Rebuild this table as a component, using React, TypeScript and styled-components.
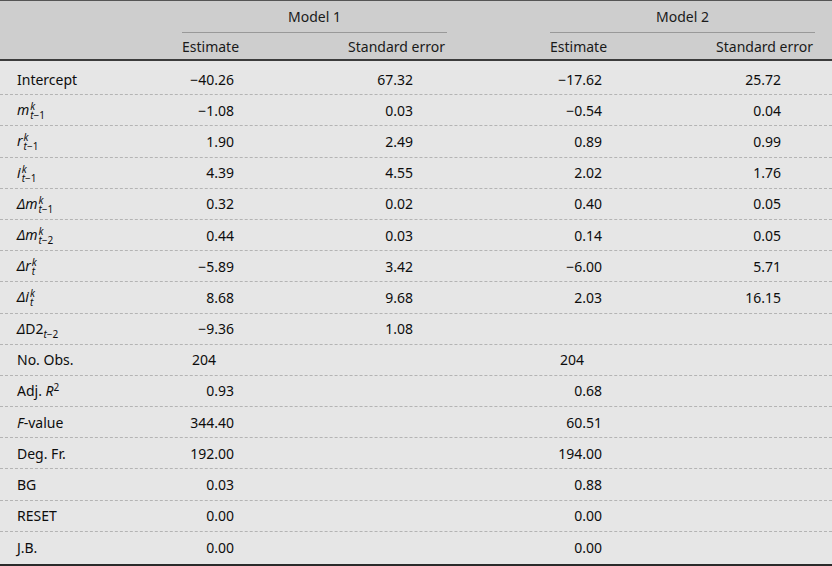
import styled, { createGlobalStyle } from "styled-components";

const GlobalStyle = createGlobalStyle`
  html, body {
    margin: 0;
    padding: 0;
    background: #e6e6e6;
  }
  body {
    font-family: "Noto Sans", "Open Sans", sans-serif;
    color: #0d0d0d;
  }
`;

const COLUMNS = "182px 130px 135px 103px 130px 135px 17px";

const Table = styled.div`
  width: 832px;
  height: 566px;
  box-sizing: border-box;
  border-top: 1px solid #555;
  border-bottom: 2px solid #2a2a2a;
  background: #e6e6e6;
  font-size: 14px;
`;

const Head = styled.div`
  background: #cecece;
  border-bottom: 2px solid #3c3c3c;
`;

const HeadRow = styled.div<{ $height: number }>`
  display: grid;
  grid-template-columns: ${COLUMNS};
  height: ${(p) => p.$height}px;
  align-items: stretch;
`;

const ModelTitle = styled.div`
  grid-column: span 2;
  display: flex;
  align-items: center;
  justify-content: center;
  border-bottom: 1px solid #999;
  color: #1a1a1a;
`;

const HeadCell = styled.div<{ $right?: boolean }>`
  display: flex;
  align-items: center;
  justify-content: ${(p) => (p.$right ? "flex-end" : "flex-start")};
  padding-right: ${(p) => (p.$right ? "2px" : "0")};
  color: #1a1a1a;
`;

const Body = styled.div`
  padding-top: 3px;
`;

const Row = styled.div`
  display: grid;
  grid-template-columns: ${COLUMNS};
  height: 31.2px;
  box-sizing: border-box;
  align-items: center;
  border-bottom: 1px dashed #b4b4b4;

  &:last-child {
    border-bottom: none;
  }
`;

const Label = styled.div`
  padding-left: 17px;
  white-space: nowrap;
`;

const EstCell = styled.div<{ $stat?: boolean }>`
  text-align: ${(p) => (p.$stat ? "left" : "right")};
  padding-left: ${(p) => (p.$stat ? "10px" : "0")};
  padding-right: ${(p) => (p.$stat ? "0" : "78px")};
`;

const SeCell = styled.div`
  text-align: right;
  padding-right: 34px;
`;

const I = styled.i`
  font-style: italic;
`;

const Scripts = styled.span`
  display: inline-flex;
  flex-direction: column;
  vertical-align: 5px;
  font-size: 10px;
  line-height: 9px;
  margin-left: 1px;
`;

const Sub = styled.sub`
  font-size: 10px;
  vertical-align: -4px;
  line-height: 0;
`;

const Sup = styled.sup`
  font-size: 10px;
  vertical-align: 5px;
  line-height: 0;
`;

function Lag({ v, delta, lag }: { v: string; delta?: boolean; lag?: string }) {
  return (
    <>
      {delta && <I>Δ</I>}
      <I>{v}</I>
      <Scripts>
        <I>k</I>
        <span>
          <I>t</I>
          {lag}
        </span>
      </Scripts>
    </>
  );
}

type Coef = { label: React.ReactNode; e1: string; s1?: string; e2?: string; s2?: string; stat?: boolean };

const rows: Coef[] = [
  { label: "Intercept", e1: "−40.26", s1: "67.32", e2: "−17.62", s2: "25.72" },
  { label: <Lag v="m" lag="−1" />, e1: "−1.08", s1: "0.03", e2: "−0.54", s2: "0.04" },
  { label: <Lag v="r" lag="−1" />, e1: "1.90", s1: "2.49", e2: "0.89", s2: "0.99" },
  { label: <Lag v="i" lag="−1" />, e1: "4.39", s1: "4.55", e2: "2.02", s2: "1.76" },
  { label: <Lag v="m" delta lag="−1" />, e1: "0.32", s1: "0.02", e2: "0.40", s2: "0.05" },
  { label: <Lag v="m" delta lag="−2" />, e1: "0.44", s1: "0.03", e2: "0.14", s2: "0.05" },
  { label: <Lag v="r" delta />, e1: "−5.89", s1: "3.42", e2: "−6.00", s2: "5.71" },
  { label: <Lag v="i" delta />, e1: "8.68", s1: "9.68", e2: "2.03", s2: "16.15" },
  {
    label: (
      <>
        <I>Δ</I>D2
        <Sub>
          <I>t</I>−2
        </Sub>
      </>
    ),
    e1: "−9.36",
    s1: "1.08",
  },
  { label: "No. Obs.", e1: "204", e2: "204", stat: true },
  {
    label: (
      <>
        Adj. <I>R</I>
        <Sup>2</Sup>
      </>
    ),
    e1: "0.93",
    e2: "0.68",
  },
  {
    label: (
      <>
        <I>F</I>-value
      </>
    ),
    e1: "344.40",
    e2: "60.51",
  },
  { label: "Deg. Fr.", e1: "192.00", e2: "194.00" },
  { label: "BG", e1: "0.03", e2: "0.88" },
  { label: "RESET", e1: "0.00", e2: "0.00" },
  { label: "J.B.", e1: "0.00", e2: "0.00" },
];

function App() {
  return (
    <>
      <GlobalStyle />
      <Table>
        <Head>
          <HeadRow $height={32}>
            <div />
            <ModelTitle>Model 1</ModelTitle>
            <div />
            <ModelTitle>Model 2</ModelTitle>
            <div />
          </HeadRow>
          <HeadRow $height={26}>
            <div />
            <HeadCell>Estimate</HeadCell>
            <HeadCell $right>Standard error</HeadCell>
            <div />
            <HeadCell>Estimate</HeadCell>
            <HeadCell $right>Standard error</HeadCell>
            <div />
          </HeadRow>
        </Head>
        <Body>
          {rows.map((r, i) => (
            <Row key={i}>
              <Label>{r.label}</Label>
              <EstCell $stat={r.stat}>{r.e1}</EstCell>
              <SeCell>{r.s1 ?? ""}</SeCell>
              <div />
              <EstCell $stat={r.stat}>{r.e2 ?? ""}</EstCell>
              <SeCell>{r.s2 ?? ""}</SeCell>
              <div />
            </Row>
          ))}
        </Body>
      </Table>
    </>
  );
}

export default App;
